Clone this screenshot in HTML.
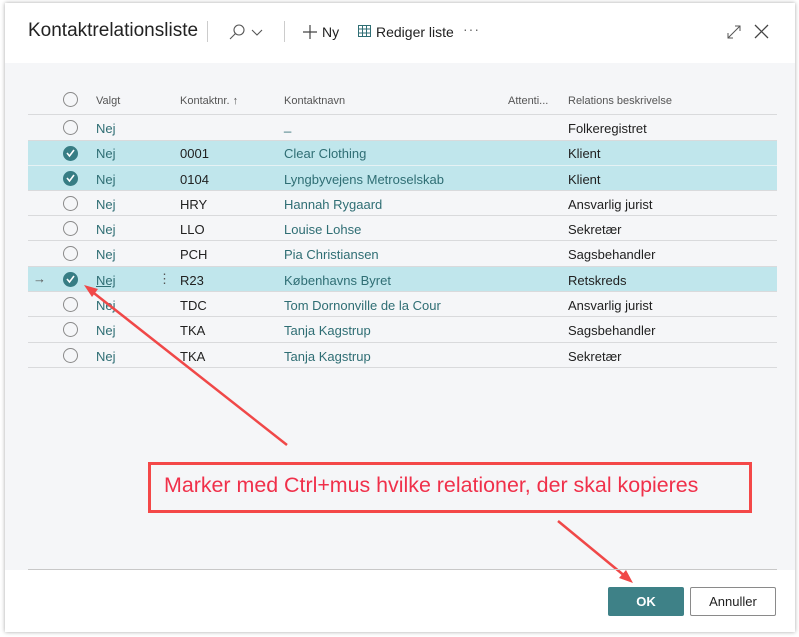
<!DOCTYPE html>
<html><head><meta charset="utf-8"><style>
*{margin:0;padding:0;box-sizing:border-box}
body{width:799px;height:637px;background:#fff;position:relative;overflow:hidden;font-family:"Liberation Sans",sans-serif;font-size:13px;color:#212121}
.dlg{position:absolute;left:5px;top:3px;width:790px;height:629px;background:#fff;box-shadow:0 0 4px rgba(0,0,0,.35)}
.gray{position:absolute;left:5px;top:63px;width:790px;height:507px;background:#f5f6f8}
.a{position:absolute;white-space:nowrap}
.row{position:absolute;left:28px;width:749px;border-bottom:1px solid #d9dadc}
.hl{background:#c0e6ec}
.t{color:#2f6e74}
.circ{position:absolute;left:63px;width:15px;height:15px;border:1px solid #8a8a8a;border-radius:50%}
.chk{position:absolute;left:63px;width:15px;height:15px;border-radius:50%;background:#377d84}
.h{color:#555;font-size:11px}
</style></head><body>
<div class="dlg"></div>
<div class="a" style="left:28px;top:20px;font-size:19px;color:#222">Kontaktrelationsliste</div>
<div class="a" style="left:207px;top:21px;width:1px;height:21px;background:#ccc"></div>
<svg class="a" style="left:228px;top:23px" width="40" height="18"><circle cx="11" cy="7" r="5" fill="none" stroke="#555" stroke-width="1.1"/><line x1="7.5" y1="10.5" x2="2" y2="16" stroke="#555" stroke-width="1.1"/><polyline points="24,7 29,12 34,7" fill="none" stroke="#555" stroke-width="1.1"/></svg>
<div class="a" style="left:284px;top:21px;width:1px;height:21px;background:#ccc"></div>
<svg class="a" style="left:303px;top:25px" width="14" height="14"><path d="M7 0V14M0 7H14" stroke="#444" stroke-width="1.2"/></svg>
<div class="a" style="left:322px;top:24px;font-size:14px">Ny</div>
<svg class="a" style="left:358px;top:25px" width="14" height="13"><rect x="0.5" y="0.5" width="12" height="11" fill="none" stroke="#2f6e74"/><path d="M0.5 4H12.5M4.5 0.5V11.5M8.5 0.5V11.5M0.5 8H12.5" stroke="#2f6e74"/></svg>
<div class="a" style="left:376px;top:24px;font-size:14px">Rediger liste</div>
<div class="a" style="left:463px;top:21px;font-size:14px;color:#666;letter-spacing:1px">···</div>
<svg class="a" style="left:726px;top:24px" width="16" height="16"><path d="M2 14L14 2M9 2H14V7M2 9V14H7" fill="none" stroke="#555" stroke-width="1"/></svg>
<svg class="a" style="left:754px;top:24px" width="15" height="15"><path d="M1 1L14 14M14 1L1 14" stroke="#444" stroke-width="1.3"/></svg>
<div class="gray"></div>
<div class="circ" style="top:92px"></div>
<div class="a h" style="left:96px;top:95px">Valgt</div>
<div class="a h" style="left:180px;top:95px">Kontaktnr. ↑</div>
<div class="a h" style="left:284px;top:95px">Kontaktnavn</div>
<div class="a h" style="left:508px;top:95px">Attenti...</div>
<div class="a h" style="left:568px;top:95px">Relations beskrivelse</div>
<div class="row" style="top:90px;height:25px"></div>

<div class="row" style="top:115px;height:26px"></div>
<div class="row hl" style="top:141px;height:25px;border-bottom-color:#e6f2f4"></div>
<div class="row hl" style="top:166px;height:25px"></div>
<div class="row" style="top:191px;height:25px"></div>
<div class="row" style="top:216px;height:25px"></div>
<div class="row" style="top:241px;height:26px"></div>
<div class="row hl" style="top:267px;height:25px"></div>
<div class="row" style="top:292px;height:25px"></div>
<div class="row" style="top:317px;height:26px"></div>
<div class="row" style="top:343px;height:25px"></div>

<div class="circ" style="top:120px"></div><div class="a t" style="left:96px;top:121px">Nej</div><div class="a t" style="left:284px;top:118px">_</div><div class="a" style="left:568px;top:121px">Folkeregistret</div>
<div class="chk" style="top:146px"></div><div class="a t" style="left:96px;top:146px">Nej</div><div class="a" style="left:180px;top:146px">0001</div><div class="a t" style="left:284px;top:146px">Clear Clothing</div><div class="a" style="left:568px;top:146px">Klient</div>
<div class="chk" style="top:171px"></div><div class="a t" style="left:96px;top:172px">Nej</div><div class="a" style="left:180px;top:172px">0104</div><div class="a t" style="left:284px;top:172px">Lyngbyvejens Metroselskab</div><div class="a" style="left:568px;top:172px">Klient</div>
<div class="circ" style="top:196px"></div><div class="a t" style="left:96px;top:197px">Nej</div><div class="a" style="left:180px;top:197px">HRY</div><div class="a t" style="left:284px;top:197px">Hannah Rygaard</div><div class="a" style="left:568px;top:197px">Ansvarlig jurist</div>
<div class="circ" style="top:221px"></div><div class="a t" style="left:96px;top:222px">Nej</div><div class="a" style="left:180px;top:222px">LLO</div><div class="a t" style="left:284px;top:222px">Louise Lohse</div><div class="a" style="left:568px;top:222px">Sekretær</div>
<div class="circ" style="top:246px"></div><div class="a t" style="left:96px;top:247px">Nej</div><div class="a" style="left:180px;top:247px">PCH</div><div class="a t" style="left:284px;top:247px">Pia Christiansen</div><div class="a" style="left:568px;top:247px">Sagsbehandler</div>
<div class="a" style="left:33px;top:271px;color:#555">→</div>
<div class="chk" style="top:272px"></div><div class="a t" style="left:96px;top:273px;text-decoration:underline">Nej</div><div class="a" style="left:158px;top:271px;color:#555">⋮</div><div class="a" style="left:180px;top:273px">R23</div><div class="a t" style="left:284px;top:273px">Københavns Byret</div><div class="a" style="left:568px;top:273px">Retskreds</div>
<div class="circ" style="top:297px"></div><div class="a t" style="left:96px;top:298px">Nej</div><div class="a" style="left:180px;top:298px">TDC</div><div class="a t" style="left:284px;top:298px">Tom Dornonville de la Cour</div><div class="a" style="left:568px;top:298px">Ansvarlig jurist</div>
<div class="circ" style="top:322px"></div><div class="a t" style="left:96px;top:323px">Nej</div><div class="a" style="left:180px;top:323px">TKA</div><div class="a t" style="left:284px;top:323px">Tanja Kagstrup</div><div class="a" style="left:568px;top:323px">Sagsbehandler</div>
<div class="circ" style="top:348px"></div><div class="a t" style="left:96px;top:349px">Nej</div><div class="a" style="left:180px;top:349px">TKA</div><div class="a t" style="left:284px;top:349px">Tanja Kagstrup</div><div class="a" style="left:568px;top:349px">Sekretær</div>

<svg class="a" style="left:0;top:0" width="799" height="637">
<g fill="none" stroke="#fff" stroke-width="1.6"><polyline points="67,153 69.5,156 74,150"/><polyline points="67,178 69.5,181 74,175"/><polyline points="67,279 69.5,282 74,276"/></g>
<line x1="287" y1="445" x2="90" y2="290" stroke="#f04848" stroke-width="2.5"/>
<polygon points="84,285 98,289 92,297" fill="#f04848"/>
<line x1="558" y1="521" x2="626" y2="577" stroke="#f04848" stroke-width="2.5"/>
<polygon points="633,583 619,578 626,570" fill="#f04848"/>
</svg>
<div class="a" style="left:148px;top:462px;width:604px;height:51px;border:3px solid #f44848"></div>
<div class="a" style="left:164px;top:473px;font-size:21.4px;color:#f0304a;font-family:'Liberation Sans',sans-serif">Marker med Ctrl+mus hvilke relationer, der skal kopieres</div>
<div class="a" style="left:28px;top:569px;width:749px;height:1px;background:#c8c8c8"></div>
<div class="a" style="left:608px;top:587px;width:76px;height:29px;background:#3e8187;border-radius:2px;color:#fff;font-weight:bold;text-align:center;line-height:29px;font-size:13px">OK</div>
<div class="a" style="left:690px;top:587px;width:86px;height:29px;border:1px solid #8a8a8a;border-radius:2px;text-align:center;line-height:27px;font-size:13px">Annuller</div>
</body></html>
